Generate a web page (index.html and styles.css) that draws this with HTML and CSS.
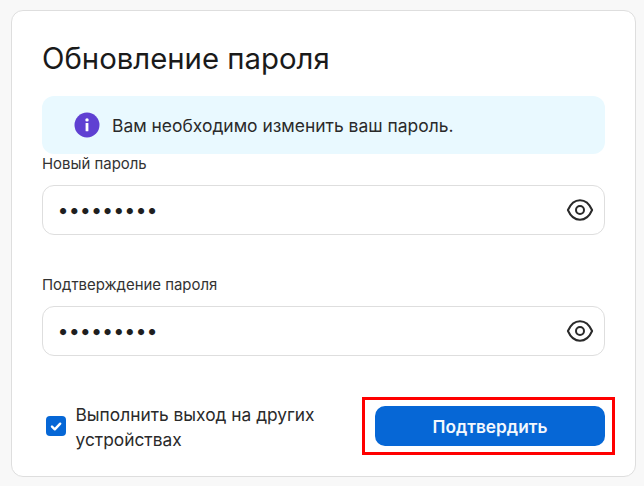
FILE: index.html
```html
<!DOCTYPE html>
<html lang="ru">
<head>
<meta charset="utf-8">
<title>Обновление пароля</title>
<link rel="stylesheet" href="styles.css">
</head>
<body>
<main class="card">
  <h1 class="title">Обновление пароля</h1>
  <div class="alert">
    <svg class="alert-icon" viewBox="0 0 26 26" aria-hidden="true">
      <circle cx="13" cy="13" r="12.500" fill="#5f40d2"/>
      <circle cx="13" cy="7.900" r="1.700" fill="#fff"/>
      <rect x="11.600" y="10.900" width="2.800" height="8.400" rx="0.600" fill="#fff"/>
    </svg>
    <span>Вам необходимо изменить ваш пароль.</span>
  </div>
  <div class="field field-first">
    <label class="label" for="p1">Новый пароль</label>
    <div class="input-wrap">
      <input class="input" id="p1" type="password" value="123456789">
      <svg class="eye" viewBox="0 0 28 24" aria-hidden="true">
        <path d="M1.900 12C4.500 6 9 2.200 14 2.200s9.500 3.800 12.100 9.800C23.500 18 19 21.800 14 21.800S4.500 18 1.900 12Z" fill="none" stroke="#2a2a2a" stroke-width="2" stroke-linejoin="round"/>
        <circle cx="14" cy="12" r="4" fill="none" stroke="#2a2a2a" stroke-width="2"/>
      </svg>
    </div>
  </div>
  <div class="field field-second">
    <label class="label" for="p2">Подтверждение пароля</label>
    <div class="input-wrap">
      <input class="input" id="p2" type="password" value="123456789">
      <svg class="eye" viewBox="0 0 28 24" aria-hidden="true">
        <path d="M1.900 12C4.500 6 9 2.200 14 2.200s9.500 3.800 12.100 9.800C23.500 18 19 21.800 14 21.800S4.500 18 1.900 12Z" fill="none" stroke="#2a2a2a" stroke-width="2" stroke-linejoin="round"/>
        <circle cx="14" cy="12" r="4" fill="none" stroke="#2a2a2a" stroke-width="2"/>
      </svg>
    </div>
  </div>
  <div class="footer">
    <label class="check">
      <span class="box">
        <svg viewBox="0 0 20 20" aria-hidden="true"><path d="M6 10.600l2.800 2.700 5.400-5.600" fill="none" stroke="#fff" stroke-width="2.400" stroke-linecap="round" stroke-linejoin="round"/></svg>
      </span>
      <span class="check-text">Выполнить выход на других устройствах</span>
    </label>
    <div class="submit-wrap">
      <button class="submit" type="button">Подтвердить</button>
      <span class="highlight"></span>
    </div>
  </div>
</main>
</body>
</html>
```
FILE: styles.css
```css
* { box-sizing: border-box; }
html, body { margin: 0; height: 100%; }
body {
  background: #f8f8f8;
  padding: 10px 8px 9px 11px;
  font-family: Inter, "Liberation Sans", sans-serif;
  color: #1f1f1f;
  overflow: hidden;
}
.card {
  width: 625px;
  height: 467px;
  background: #fff;
  border: 1px solid #dedede;
  border-radius: 12px;
  padding: 30px 30px 0;
}
.title {
  margin: 0;
  font-size: 29.330px;
  line-height: 36px;
  font-weight: 400;
  color: #1a1a1a;
}
.alert {
  margin-top: 19px;
  height: 58px;
  border-radius: 12px;
  background: #e9f9ff;
  padding-left: 32px;
  display: flex;
  align-items: center;
  gap: 12px;
  font-size: 17.450px;
  color: #2a2a2a;
}
.alert-icon { width: 26px; height: 26px; flex: none; }
.field-first { margin-top: 0; }
.field-second { margin-top: 40px; }
.label {
  display: block;
  height: 31px;
  font-size: 14.930px;
  line-height: 20px;
  color: #333;
}
.input-wrap { position: relative; }
.input {
  display: block;
  width: 100%;
  height: 50px;
  border: 1px solid #dedede;
  border-radius: 12px;
  padding: 0 56px 0 14.500px;
  font-family: Inter, sans-serif;
  font-size: 19.800px;
  color: #1f1f1f;
  background: #fff;
  outline: none;
}
.eye {
  position: absolute;
  right: 11px;
  top: 13px;
  width: 28px;
  height: 24px;
}
.footer {
  margin-top: 44px;
  display: flex;
  align-items: center;
}
.check {
  display: flex;
  align-items: center;
  width: 333px;
  padding-left: 4px;
  font-size: 17.330px;
  line-height: 25px;
  color: #2a2a2a;
}
.box {
  flex: none;
  width: 20px;
  height: 20px;
  border-radius: 4px;
  background: #0667d6;
  margin-right: 9.500px;
}
.box svg { display: block; width: 20px; height: 20px; }
.check-text { width: 260px; padding-top: 2px; }
.submit-wrap { position: relative; }
.submit {
  display: block;
  width: 230px;
  height: 40px;
  border: 0;
  border-radius: 10px;
  background: #0667d6;
  color: #f4f8fd;
  font-family: Inter, sans-serif;
  font-size: 17.300px;
  font-weight: 600;
}
.highlight {
  position: absolute;
  left: -13px;
  right: -10px;
  top: -9px;
  bottom: -9px;
  border: 3px solid #f00;
  pointer-events: none;
}
```
